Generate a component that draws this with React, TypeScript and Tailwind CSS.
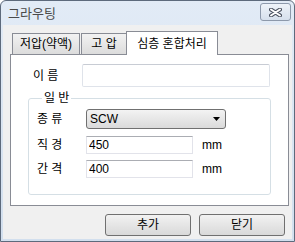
import { useState } from "react";

export default function App() {
  const [form, setForm] = useState({ name: "", kind: "SCW", dia: "450", gap: "400" });
  const tabs = ["저압(약액)", "고 압", "심층 혼합처리"];
  const [tab] = useState(2);

  return (
    <div className="w-[295px] h-[242px] flex flex-col border border-[#5d6a7c] rounded-t-[6px] bg-gradient-to-b from-[#e2ebf6] to-[#d2dfee] text-[12px] text-black font-['Liberation_Sans','Noto_Sans_CJK_KR',sans-serif] overflow-hidden">
      {/* title bar */}
      <div className="h-[24px] flex items-center justify-between pl-[7px] pr-[3px]">
        <span className="text-[13px] text-[#4a4a4a] font-['Noto_Sans_CJK_KR',sans-serif]">그라우팅</span>
        <button className="w-[31px] h-[18px] mt-[-2px] flex items-center justify-center rounded-[3px] border border-[#8d99ab] bg-gradient-to-b from-[#eef3f9] to-[#d6e0ec]">
          <svg width="13" height="9" viewBox="0 0 13 9">
            <path d="M2 1.5 L11 7.5 M11 1.5 L2 7.5" stroke="#4b5260" strokeWidth="4" strokeLinecap="round" />
            <path d="M2 1.5 L11 7.5 M11 1.5 L2 7.5" stroke="#ffffff" strokeWidth="2" strokeLinecap="round" />
          </svg>
        </button>
      </div>

      {/* client */}
      <div className="flex-1 mx-[2px] mb-[2px] bg-[#f0f0f0] flex flex-col">
        {/* tabs */}
        <div className="flex items-end pl-[9px] pt-[5px] h-[29px]">
          {tabs.map((t, i) =>
            i === tab ? (
              <div
                key={t}
                className="relative z-10 -mb-px ml-[-1px] w-[92px] h-[24px] bg-white border border-b-0 border-[#898c95] flex items-center justify-center"
              >
                {t}
              </div>
            ) : (
              <div
                key={t}
                className={
                  "h-[21px] border border-b-0 border-[#898c95] bg-gradient-to-b from-[#f2f2f2] to-[#dcdcdc] flex items-center justify-center " +
                  (i === 0 ? "w-[68px]" : "w-[46px] ml-[1px]")
                }
              >
                {t}
              </div>
            )
          )}
        </div>

        {/* panel */}
        <div className="ml-[7px] mr-[3px] h-[152px] bg-white border border-[#898c95] pl-[17px] pt-[9px]">
          <div className="flex items-center h-[23px] pl-[5px]">
            <span className="w-[49px]">이 름</span>
            <input
              value={form.name}
              onChange={(e) => setForm({ ...form, name: e.target.value })}
              className="w-[188px] h-[23px] border border-[#dfe3ea] border-t-[#c8ccd4] rounded-[2px] px-[3px] outline-none"
            />
          </div>

          <fieldset className="mt-[4px] w-[243px] h-[104px] border border-[#d5dfe5] rounded-[3px] pl-[8px] pt-[4px]">
            <legend className="ml-[5px] px-[2px] leading-[14px]">일 반</legend>

            <div className="flex items-center h-[20px]">
              <span className="w-[49px]">종 류</span>
              <div className="w-[140px] h-[20px] flex items-center justify-between border border-[#707070] rounded-[3px] bg-gradient-to-b from-[#f3f3f3] to-[#dadada] pl-[3px] pr-[5px]">
                <span>{form.kind}</span>
                <svg width="7" height="4" viewBox="0 0 7 4">
                  <path d="M0 0 H7 L3.5 4 Z" fill="#000" />
                </svg>
              </div>
            </div>

            <div className="flex items-center h-[18px] mt-[7px]">
              <span className="w-[49px]">직 경</span>
              <input
                value={form.dia}
                onChange={(e) => setForm({ ...form, dia: e.target.value })}
                className="w-[107px] h-[18px] border border-[#e2e3ea] border-t-[#abadb3] px-[2px] outline-none"
              />
              <span className="ml-[9px]">mm</span>
            </div>

            <div className="flex items-center h-[18px] mt-[6px]">
              <span className="w-[49px]">간 격</span>
              <input
                value={form.gap}
                onChange={(e) => setForm({ ...form, gap: e.target.value })}
                className="w-[107px] h-[18px] border border-[#e2e3ea] border-t-[#abadb3] px-[2px] outline-none"
              />
              <span className="ml-[9px]">mm</span>
            </div>
          </fieldset>
        </div>

        {/* buttons */}
        <div className="flex justify-end gap-[8px] mt-[8px] mr-[7px]">
          <button className="w-[86px] h-[22px] border border-[#707070] rounded-[3px] bg-gradient-to-b from-[#f2f2f2] to-[#d9d9d9]">
            추가
          </button>
          <button className="w-[86px] h-[22px] border border-[#707070] rounded-[3px] bg-gradient-to-b from-[#f2f2f2] to-[#d9d9d9]">
            닫기
          </button>
        </div>
      </div>
    </div>
  );
}
